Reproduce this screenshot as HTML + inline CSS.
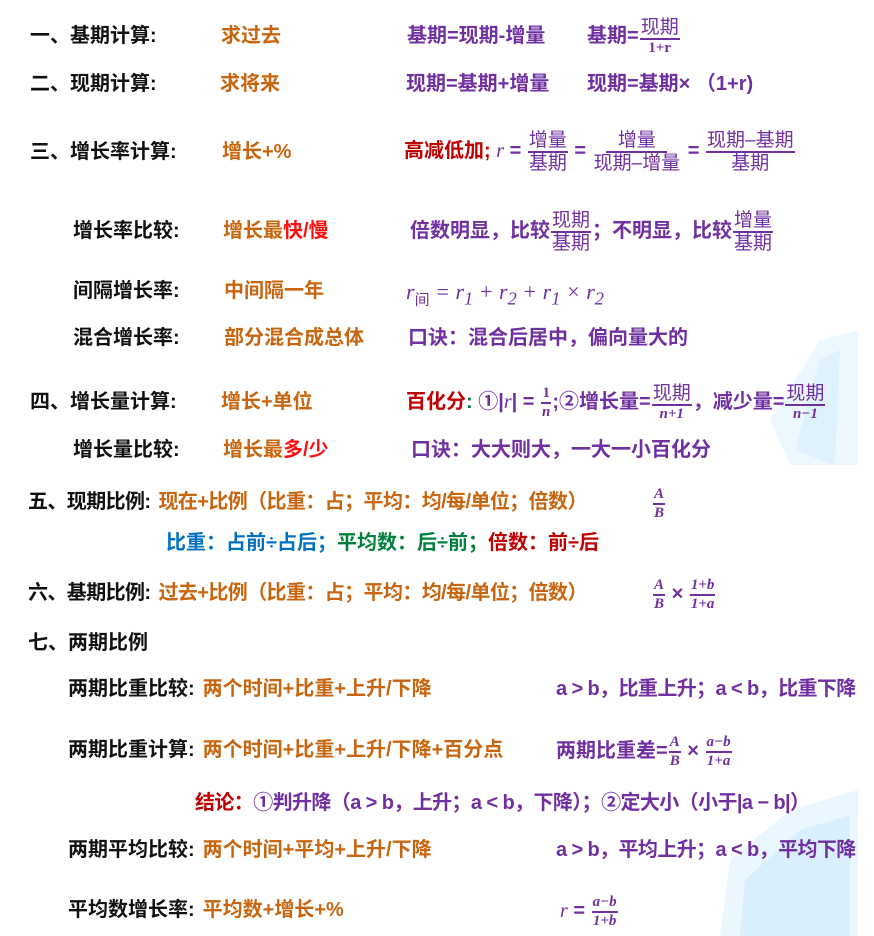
<!DOCTYPE html>
<html><head><meta charset="utf-8"><style>
body{margin:0;width:874px;height:936px;background:#fff;position:relative;overflow:hidden;font-family:"Liberation Sans","Noto Sans CJK SC",sans-serif;font-weight:bold;font-size:20px}
.t{position:absolute;white-space:nowrap;line-height:24px;height:24px}
.k{color:#111}.o{color:#c8650f}.p{color:#7030a0}.r{color:#c00000}.b{color:#0070c0}.g{color:#00803a}.rr{color:#ff1010}
.f{display:inline-flex;flex-direction:column;align-items:center;vertical-align:middle;line-height:1;margin:0 1px}
.f>span{padding:0 1px}
.f>span:first-child{border-bottom:2px solid #7030a0;padding-bottom:1px}
.f>span:last-child{padding-top:1px}
.s{font-size:15px;font-family:"Liberation Serif",serif;font-style:italic}
.m{font-family:"Liberation Serif",serif;font-style:italic;font-weight:normal}
.fs{font-size:19px;font-weight:normal}
.ml{margin-left:8px}
.n{letter-spacing:-0.6px}
</style></head><body>
<svg style="position:absolute;left:0;top:0" width="874" height="936">
<polygon points="770,420 820,340 858,330 858,465 790,465" fill="#e6f4ff" opacity=".7"/>
<polygon points="795,450 820,360 840,350 835,465" fill="#d3ecfc" opacity=".6"/>
<polygon points="720,936 730,860 790,810 858,790 858,936" fill="#e3f3ff" opacity=".7"/>
<polygon points="740,936 745,880 800,830 850,815 850,936" fill="#cfeafc" opacity=".6"/>
</svg>

<div class="t k" style="left:30px;top:24px">一、基期计算:</div>
<div class="t o" style="left:221px;top:24px">求过去</div>
<div class="t p" style="left:407px;top:24px">基期=现期-增量</div>
<div class="t p" style="left:587px;top:12px;height:48px;line-height:48px">基期=<span class="f"><span class="fs">现期</span><span class="s" style="font-style:normal">1+r</span></span></div>

<div class="t k" style="left:30px;top:72px">二、现期计算:</div>
<div class="t o" style="left:220px;top:72px">求将来</div>
<div class="t p" style="left:406px;top:72px">现期=基期+增量</div>
<div class="t p" style="left:587px;top:72px">现期=基期× （1+r)</div>

<div class="t k" style="left:30px;top:140px">三、增长率计算:</div>
<div class="t o" style="left:222px;top:140px">增长+%</div>
<div class="t" style="left:404px;top:127px;height:48px;line-height:48px"><span class="r">高减低加;</span> <span class="p"><span class="m">r</span> = <span class="f"><span class="fs">增量</span><span class="fs">基期</span></span> = <span class="f"><span class="fs">&nbsp;&nbsp;增量&nbsp;&nbsp;</span><span class="fs">现期–增量</span></span> = <span class="f"><span class="fs">现期–基期</span><span class="fs">基期</span></span></span></div>

<div class="t k" style="left:73px;top:219px">增长率比较:</div>
<div class="t o" style="left:223px;top:219px">增长最<span class="rr">快/慢</span></div>
<div class="t p" style="left:410px;top:207px;height:48px;line-height:48px">倍数明显，比较<span class="f"><span class="fs">现期</span><span class="fs">基期</span></span>；不明显，比较<span class="f"><span class="fs">增量</span><span class="fs">基期</span></span></div>

<div class="t k" style="left:73px;top:279px">间隔增长率:</div>
<div class="t o" style="left:224px;top:279px">中间隔一年</div>
<div class="t p m" style="left:406px;top:280px;font-size:22px"><i>r</i><sub style="font-style:normal;font-family:'Noto Sans CJK SC';font-size:15px">间</sub> = <i>r</i><sub>1</sub> + <i>r</i><sub>2</sub> + <i>r</i><sub>1</sub> × <i>r</i><sub>2</sub></div>

<div class="t k" style="left:73px;top:326px">混合增长率:</div>
<div class="t o" style="left:224px;top:326px">部分混合成总体</div>
<div class="t p" style="left:408px;top:326px">口诀：混合后居中，偏向量大的</div>

<div class="t k" style="left:30px;top:390px">四、增长量计算:</div>
<div class="t o" style="left:221px;top:390px">增长+单位</div>
<div class="t p" style="left:406px;top:378px;height:48px;line-height:48px"><span class="r">百化分</span><span class="g">:</span> ①|<span class="m">r</span>| = <span class="f"><span class="s" style="font-style:normal">1</span><span class="s">n</span></span>;②增长量=<span class="f"><span class="fs">现期</span><span class="s">n+1</span></span>，减少量=<span class="f"><span class="fs">现期</span><span class="s">n−1</span></span></div>

<div class="t k" style="left:73px;top:438px">增长量比较:</div>
<div class="t o" style="left:223px;top:438px">增长最<span class="rr">多/少</span></div>
<div class="t p" style="left:411px;top:438px">口诀：大大则大，一大一小百化分</div>

<div class="t k n" style="left:28px;top:490px">五、现期比例:<span class="o ml">现在+比例（比重：占；平均：均/每/单位；倍数）</span></div>
<div class="t p" style="left:652px;top:482px;height:42px;line-height:42px"><span class="f"><span class="s">A</span><span class="s">B</span></span></div>

<div class="t b" style="left:166px;top:531px">比重：占前÷占后；<span class="g">平均数：后÷前；</span><span class="r">倍数：前÷后</span></div>

<div class="t k n" style="left:28px;top:581px">六、基期比例:<span class="o ml">过去+比例（比重：占；平均：均/每/单位；倍数）</span></div>
<div class="t p" style="left:652px;top:573px;height:42px;line-height:42px"><span class="f"><span class="s">A</span><span class="s">B</span></span> × <span class="f"><span class="s">1+b</span><span class="s">1+a</span></span></div>

<div class="t k" style="left:28px;top:631px">七、两期比例</div>

<div class="t k" style="left:68px;top:677px">两期比重比较:<span class="o ml">两个时间+比重+上升/下降</span></div>
<div class="t p n" style="left:556px;top:677px">a &gt; b，比重上升；a &lt; b，比重下降</div>

<div class="t k" style="left:68px;top:738px">两期比重计算:<span class="o ml">两个时间+比重+上升/下降+百分点</span></div>
<div class="t p" style="left:556px;top:730px;height:42px;line-height:42px">两期比重差=<span class="f"><span class="s">A</span><span class="s">B</span></span> × <span class="f"><span class="s">a−b</span><span class="s">1+a</span></span></div>

<div class="t p n" style="left:195px;top:791px"><span class="r">结论：</span>①判升降（a &gt; b，上升；a &lt; b，下降）；②定大小（小于|a − b|）</div>

<div class="t k" style="left:68px;top:838px">两期平均比较:<span class="o ml">两个时间+平均+上升/下降</span></div>
<div class="t p n" style="left:556px;top:838px">a &gt; b，平均上升；a &lt; b，平均下降</div>

<div class="t k" style="left:68px;top:898px">平均数增长率:<span class="o ml">平均数+增长+%</span></div>
<div class="t p" style="left:560px;top:890px;height:42px;line-height:42px"><span class="m">r</span> = <span class="f"><span class="s">a−b</span><span class="s">1+b</span></span></div>
</body></html>
